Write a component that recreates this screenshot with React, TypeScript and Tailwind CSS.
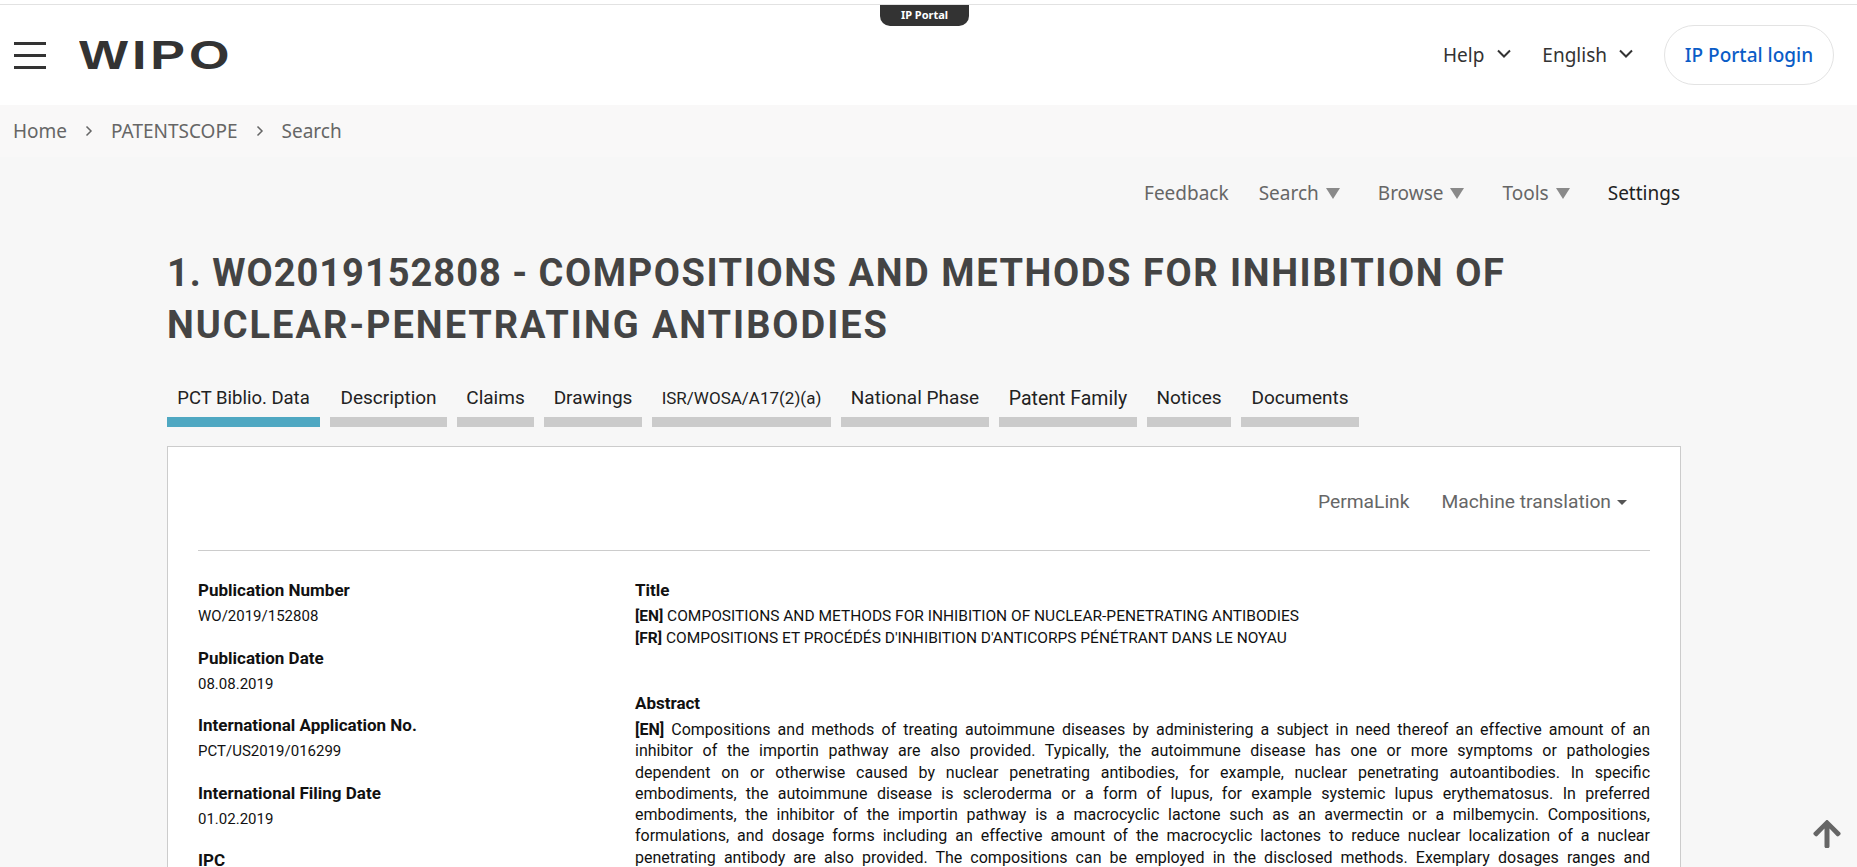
import { FaArrowUp } from "react-icons/fa";

const noto = "font-['Noto_Sans',sans-serif]";
const din = "font-['Roboto',sans-serif]";

const tabs = [
  ["PCT Biblio. Data", "w-[153px] text-[18.5px]", true],
  ["Description", "w-[117px] text-[19px]", false],
  ["Claims", "w-[77px] text-[19px]", false],
  ["Drawings", "w-[98px] text-[19px]", false],
  ["ISR/WOSA/A17(2)(a)", "w-[179px] text-[17px]", false],
  ["National Phase", "w-[148px] text-[19px]", false],
  ["Patent Family", "w-[138px] text-[19.5px]", false],
  ["Notices", "w-[84px] text-[19px]", false],
  ["Documents", "w-[118px] text-[19px]", false],
] as const;

const biblio = [
  ["Publication Number", "WO/2019/152808"],
  ["Publication Date", "08.08.2019"],
  ["International Application No.", "PCT/US2019/016299"],
  ["International Filing Date", "01.02.2019"],
  ["IPC", ""],
];

const abstract = [
  "Compositions and methods of treating autoimmune diseases by administering a subject in need thereof an effective amount of an",
  "inhibitor of the importin pathway are also provided. Typically, the autoimmune disease has one or more symptoms or pathologies",
  "dependent on or otherwise caused by nuclear penetrating antibodies, for example, nuclear penetrating autoantibodies. In specific",
  "embodiments, the autoimmune disease is scleroderma or a form of lupus, for example systemic lupus erythematosus. In preferred",
  "embodiments, the inhibitor of the importin pathway is a macrocyclic lactone such as an avermectin or a milbemycin. Compositions,",
  "formulations, and dosage forms including an effective amount of the macrocyclic lactones to reduce nuclear localization of a nuclear",
  "penetrating antibody are also provided. The compositions can be employed in the disclosed methods. Exemplary dosages ranges and",
];

function Chevron({ className }: { className: string }) {
  return (
    <svg className={className} width="14" height="9" viewBox="0 0 14 9" fill="none" stroke="currentColor" strokeWidth="2">
      <path d="M1 1.5 7 7.5 13 1.5" />
    </svg>
  );
}

function Crumb() {
  return (
    <svg width="8" height="12" viewBox="0 0 8 12" fill="none" stroke="#666" strokeWidth="1.5" className="mx-[18px]">
      <path d="M1.5 1.5 6 6 1.5 10.5" />
    </svg>
  );
}

function NavItem({ label, className }: { label: string; className: string }) {
  return (
    <div className={`flex items-center ${className}`}>
      <span>{label}</span>
      <span className="ml-[7px] h-0 w-0 border-x-[7px] border-t-[11px] border-x-transparent border-t-[#8a8a8a]" />
    </div>
  );
}

export default function App() {
  return (
    <div className="relative h-[867px] overflow-hidden bg-[#f7f7f7]">
      <div className="h-[4px] bg-white" />
      <header className={`relative flex h-[101px] items-center justify-between border-t-[1px] border-[#e2e2e2] bg-white ${noto}`}>
        <div className="absolute left-[880px] top-0 flex h-[21px] w-[89px] items-center justify-center rounded-b-[10px] bg-[#333333] text-[11px] font-bold text-white">
          IP Portal
        </div>
        <div className="flex items-center">
          <div className="ml-[14px] flex w-[32px] flex-col gap-[9px]">
            <span className="h-[3px] bg-[#333333]" />
            <span className="h-[3px] bg-[#333333]" />
            <span className="h-[3px] bg-[#333333]" />
          </div>
          <span className="ml-[33px] origin-left scale-x-[1.3] font-['Liberation_Sans',sans-serif] text-[40px] font-bold leading-none tracking-[3px] text-[#333333]">WIPO</span>
        </div>
        <div className="flex items-center text-[19px] text-[#333333]">
          <span>Help</span>
          <Chevron className="ml-[13px] mb-[4px]" />
          <span className="ml-[31px]">English</span>
          <Chevron className="ml-[12px] mb-[4px]" />
          <div className="ml-[31px] mr-[23px] flex h-[60px] w-[170px] items-center justify-center rounded-[30px] border border-[#e3e3e3] font-medium text-[#0a5cc7]">
            IP Portal login
          </div>
        </div>
      </header>

      <nav className={`flex h-[52px] items-center bg-[#f9f8f8] pl-[13px] text-[19px] text-[#666666] ${noto}`}>
        <span>Home</span>
        <Crumb />
        <span>PATENTSCOPE</span>
        <Crumb />
        <span>Search</span>
      </nav>

      <div className={`mr-[177px] mt-[14px] flex h-[44px] items-center justify-end text-[19px] text-[#666666] ${noto}`}>
        <span>Feedback</span>
        <NavItem label="Search" className="ml-[30px]" />
        <NavItem label="Browse" className="ml-[38px]" />
        <NavItem label="Tools" className="ml-[38px]" />
        <span className="ml-[38px] text-[#222222]">Settings</span>
      </div>

      <main className={`ml-[167px] mr-[176px] mt-[32px] ${din}`}>
        <h1 className="text-[38px] font-bold leading-[52px] text-[#444444]">
          <span className="tracking-[1px]">1. WO2019152808 - </span>
          <span className="tracking-[1.57px]">COMPOSITIONS AND METHODS FOR INHIBITION OF</span>
          <br />
          <span className="tracking-[1.95px]">NUCLEAR-PENETRATING ANTIBODIES</span>
        </h1>

        <div className="mt-[29px] flex gap-[10px]">
          {tabs.map(([label, width, active]) => (
            <div key={label} className={width}>
              <div className="flex h-[37px] items-center justify-center whitespace-nowrap text-[#222222]">{label}</div>
              <div className={`h-[10px] ${active ? "bg-[#4fa8c2]" : "bg-[#cbcbcb]"}`} />
            </div>
          ))}
        </div>

        <section className="mt-[19px] border border-[#cccccc] bg-white px-[30px]">
          <div className="flex h-[104px] items-center justify-end border-b border-[#cccccc] pt-[8px] pr-[23px] text-[19.25px] text-[#666666]">
            <span>PermaLink</span>
            <span className="ml-[32px]">Machine translation</span>
            <span className="ml-[6px] h-0 w-0 border-x-[5px] border-t-[5px] border-x-transparent border-t-[#555555]" />
          </div>

          <div className="mt-[29px] flex text-[15px] leading-[21.25px] text-[#111111]">
            <div className="w-[437px] shrink-0">
              {biblio.map(([k, v]) => (
                <div key={k} className="mb-[20px]">
                  <div className="mb-[5px] text-[17px] font-bold">{k}</div>
                  <div>{v}</div>
                </div>
              ))}
            </div>
            <div className="flex-1 text-[15.5px]">
              <div className="mb-[5px] text-[17px] font-bold">Title</div>
              <div>
                <b className="font-bold">[EN]</b> COMPOSITIONS AND METHODS FOR INHIBITION OF NUCLEAR-PENETRATING ANTIBODIES
              </div>
              <div>
                <b className="font-bold">[FR]</b> COMPOSITIONS ET PROCÉDÉS D'INHIBITION D'ANTICORPS PÉNÉTRANT DANS LE NOYAU
              </div>
              <div className="mb-[5px] mt-[44px] text-[17px] font-bold">Abstract</div>
              <div className="text-[16px]">
                {abstract.map((line, i) => (
                  <div key={i} className="text-justify [text-align-last:justify]">
                    {i === 0 && <b className="font-bold">[EN] </b>}
                    {line}
                  </div>
                ))}
              </div>
            </div>
          </div>
        </section>
      </main>

      <FaArrowUp className="absolute right-[14px] top-[818px] text-[32px] text-[#666666]" />
    </div>
  );
}
